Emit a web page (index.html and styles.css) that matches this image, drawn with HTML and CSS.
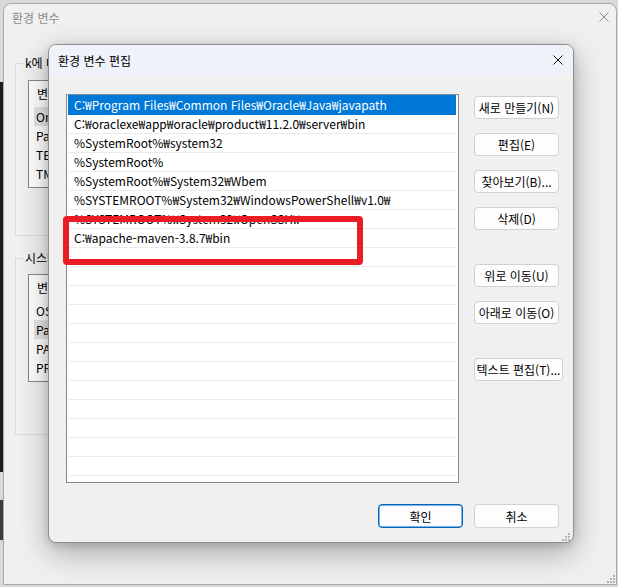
FILE: index.html
```html
<!DOCTYPE html>
<html lang="ko">
<head>
<meta charset="utf-8">
<title>환경 변수 편집</title>
<link rel="stylesheet" href="styles.css">
</head>
<body>
<div class="screen">
  <div class="back-win">
    <div class="back-title">
      <span>환경 변수</span>
      <svg class="close-icon" width="10" height="10" viewBox="0 0 10 10"><path d="M0.5 0.5L9.5 9.5M9.5 0.5L0.5 9.5" stroke="#8a8a8a" stroke-width="1"/></svg>
    </div>
    <div class="back-body">
      <fieldset class="group group-user">
        <legend>k에 대한 사용자 변수(U)</legend>
        <div class="vlist">
          <div class="vhead">변수</div>
          <div class="vrow sel">OneDrive</div>
          <div class="vrow">Path</div>
          <div class="vrow">TEMP</div>
          <div class="vrow">TMP</div>
        </div>
      </fieldset>
      <fieldset class="group group-sys">
        <legend>시스템 변수(S)</legend>
        <div class="vlist">
          <div class="vhead">변수</div>
          <div class="vrow">OS</div>
          <div class="vrow sel">Path</div>
          <div class="vrow">PATHEXT</div>
          <div class="vrow">PROCESSOR_ARCHITECTURE</div>
        </div>
      </fieldset>
    </div>
    <svg class="grip back-grip" width="8" height="8" viewBox="0 0 8 8"><g fill="#b0b0b0"><rect x="6" y="0" width="2" height="2"/><rect x="6" y="3" width="2" height="2"/><rect x="3" y="3" width="2" height="2"/><rect x="6" y="6" width="2" height="2"/><rect x="3" y="6" width="2" height="2"/><rect x="0" y="6" width="2" height="2"/></g></svg>
  </div>

  <div class="dialog">
    <div class="dlg-title">
      <span>환경 변수 편집</span>
      <svg class="close-icon" width="10" height="10" viewBox="0 0 10 10"><path d="M0.5 0.5L9.5 9.5M9.5 0.5L0.5 9.5" stroke="#1a1a1a" stroke-width="1"/></svg>
    </div>
    <div class="dlg-body">
      <div class="dlg-main">
        <div class="path-list">
          <div class="prow first sel">C:₩Program Files₩Common Files₩Oracle₩Java₩javapath</div>
          <div class="prow">C:₩oraclexe₩app₩oracle₩product₩11.2.0₩server₩bin</div>
          <div class="prow">%SystemRoot%₩system32</div>
          <div class="prow">%SystemRoot%</div>
          <div class="prow">%SystemRoot%₩System32₩Wbem</div>
          <div class="prow">%SYSTEMROOT%₩System32₩WindowsPowerShell₩v1.0₩</div>
          <div class="prow">%SYSTEMROOT%₩System32₩OpenSSH₩</div>
          <div class="prow">C:₩apache-maven-3.8.7₩bin</div>
          <div class="prow"></div>
          <div class="prow"></div>
          <div class="prow"></div>
          <div class="prow"></div>
          <div class="prow"></div>
          <div class="prow"></div>
          <div class="prow"></div>
          <div class="prow"></div>
          <div class="prow"></div>
          <div class="prow"></div>
          <div class="prow"></div>
          <div class="prow"></div>
          <div class="prow"></div>
        </div>
        <div class="side-btns">
          <button class="btn">새로 만들기(N)</button>
          <button class="btn">편집(E)</button>
          <button class="btn">찾아보기(B)...</button>
          <button class="btn">삭제(D)</button>
          <button class="btn spaced">위로 이동(U)</button>
          <button class="btn">아래로 이동(O)</button>
          <button class="btn spaced wide">텍스트 편집(T)...</button>
        </div>
      </div>
      <div class="dlg-footer">
        <button class="btn foot default">확인</button>
        <button class="btn foot">취소</button>
      </div>
    </div>
    <div class="highlight"></div>
    <svg class="grip dlg-grip" width="8" height="8" viewBox="0 0 8 8"><g fill="#b4b4b4"><rect x="6" y="0" width="2" height="2"/><rect x="6" y="3" width="2" height="2"/><rect x="3" y="3" width="2" height="2"/><rect x="6" y="6" width="2" height="2"/><rect x="3" y="6" width="2" height="2"/><rect x="0" y="6" width="2" height="2"/></g></svg>
  </div>
</div>
</body>
</html>
```

FILE: styles.css
```css
* { box-sizing: border-box; }
html, body { margin: 0; padding: 0; }
body {
  width: 618px;
  height: 587px;
  overflow: hidden;
  font-family: "Noto Sans CJK KR", "Noto Sans", sans-serif;
  font-size: 12px;
  color: #000;
  background: #d8d8d8;
}
.screen {
  position: relative;
  width: 618px;
  height: 587px;
  padding: 3px 1px 2px 3px;
  background:
    linear-gradient(#1e1e1e, #1e1e1e) 0 82px / 3px 390px no-repeat,
    linear-gradient(#3a3a3a, #3a3a3a) 0 500px / 3px 40px no-repeat,
    #d9d9d9;
}

/* background window */
.back-win {
  position: relative;
  width: 614px;
  height: 582px;
  border: 1px solid #a9a9a9;
  border-radius: 8px 8px 0 0;
  background: #f0f0f0;
}
.back-title {
  height: 26px;
  display: flex;
  align-items: center;
  justify-content: space-between;
  padding: 0 7px 0 8px;
  color: #8c8c8c;
  border-radius: 8px 8px 0 0;
}
.back-body {
  padding: 25px 0 0 11px;
}
.group {
  margin: 0;
  width: 240px;
  border: 1px solid #dcdcdc;
}
.group legend {
  padding: 0 1px;
  margin-left: -4px;
  line-height: 16px;
  height: 16px;
}
.group-user { padding: 9px 12px 47px 12px; }
.group-sys { margin-top: 14px; padding: 8px 12px 52px 12px; }
.vlist {
  height: 108px;
  border: 1px solid #828790;
  background: #fff;
  overflow: hidden;
}
.vhead {
  height: 26px;
  line-height: 26px;
  padding-left: 8px;
}
.vrow {
  height: 19px;
  line-height: 19px;
  margin-left: 5px;
  padding-left: 2px;
  white-space: nowrap;
}
.vrow.sel { background: #e5e5e5; }

/* front dialog */
.dialog {
  position: absolute;
  left: 48px;
  top: 44px;
  width: 526px;
  height: 499px;
  border: 1px solid #8e8e8e;
  border-radius: 8px;
  background: #f0f0f0;
  box-shadow: 0 10px 30px rgba(0,0,0,0.30), 0 2px 8px rgba(0,0,0,0.14);
  display: flex;
  flex-direction: column;
  overflow: hidden;
}
.dlg-title {
  height: 30px;
  flex: none;
  background: #eef3f9;
  display: flex;
  align-items: center;
  justify-content: space-between;
  padding: 0 10px 0 9px;
}
.dlg-body {
  padding: 19px 10px 0 17px;
  display: flex;
  flex-direction: column;
}
.dlg-main {
  display: flex;
  gap: 15px;
}
.path-list {
  width: 393px;
  height: 389px;
  flex: none;
  border: 1px solid #828790;
  background: #fff;
  padding: 0 2px 0 1px;
  overflow: hidden;
}
.prow {
  height: 19px;
  line-height: 18px;
  border-bottom: 1px solid #ebebeb;
  padding-left: 6px;
  white-space: nowrap;
  overflow: hidden;
}
.prow.first { height: 20px; line-height: 19px; }
.prow.sel {
  background: #0078d7;
  border-bottom-color: #0078d7;
  color: #fff;
}
.side-btns {
  width: 89px;
  display: flex;
  flex-direction: column;
  align-items: flex-start;
  gap: 14px;
  padding-top: 2px;
}
.btn {
  width: 85px;
  height: 23px;
  padding: 0;
  border: 1px solid #d0d0d0;
  border-radius: 4px;
  background: #fdfdfd;
  font-family: inherit;
  font-size: 12px;
  color: #000;
  display: flex;
  align-items: center;
  justify-content: center;
  white-space: nowrap;
}
.btn.spaced { margin-top: 20px; }
.btn.wide { width: 89px; }
.dlg-footer {
  margin-top: 21px;
  display: flex;
  justify-content: flex-end;
  gap: 11px;
  padding-right: 4px;
}
.btn.foot { height: 24px; }
.btn.default {
  border-color: #0067c0;
  box-shadow: inset 0 0 0 0.5px #0067c0;
}
.highlight {
  position: absolute;
  left: 14px;
  top: 171px;
  width: 300px;
  height: 49px;
  border: 6px solid #ec1c24;
  border-radius: 4px;
}
.grip { position: absolute; }
.dlg-grip { right: 3px; bottom: 1px; }
.back-grip { right: 1px; bottom: 1px; }
```
